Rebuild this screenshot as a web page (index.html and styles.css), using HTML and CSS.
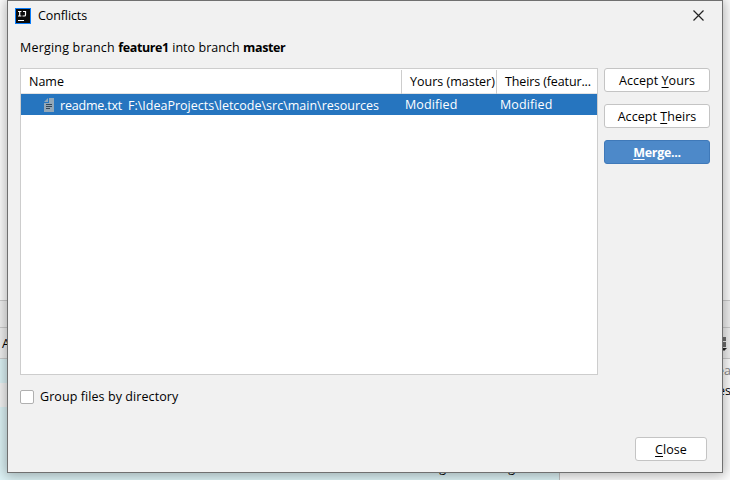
FILE: index.html
```html
<!DOCTYPE html>
<html lang="en">
<head>
<meta charset="utf-8">
<title>Conflicts</title>
<link rel="stylesheet" href="styles.css">
</head>
<body>
<div class="backdrop">
  <div class="editor"></div>
  <div class="tabs"></div>
  <div class="toolbar"><span>A</span>
    <svg width="8" height="16" viewBox="0 0 8 16"><path d="M0 1h5v4H0zM0 6h5v5H0z" fill="#6e6e6e"/><path d="M0 12h6L3 15z" fill="#222"/></svg>
  </div>
  <div class="panes">
    <div class="log"><div class="log-row"></div><div class="log-row plain"></div><div class="log-row rest"><span class="log-text">loading confirming</span></div></div>
    <div class="details"><div class="detail muted">ea</div><div class="detail">es</div></div>
  </div>
</div>
<div class="dialog">
  <div class="titlebar">
    <svg class="logo" width="16" height="16" viewBox="0 0 16 16"><rect width="16" height="16" fill="#087cfa"/><rect x="1" y="1" width="14" height="14" fill="#0a0a0a"/><path d="M3 3.5h3.4M4.7 3.5v4.5M3 8h3.4M8 3.5h2.5v3.5q0 1-1 1H7.5" fill="none" stroke="#fff" stroke-width="1.2"/><path d="M3 12h6v1H3z" fill="#fff"/></svg>
    <span class="title">Conflicts</span>
    <svg class="x" width="11" height="11" viewBox="0 0 11 11"><path d="M.5.5l10 10M10.5.5l-10 10" stroke="#222" stroke-width="1.2"/></svg>
  </div>
  <div class="message"><span class="lead">Merging branch </span><b>feature1</b><span class="into"> into branch </span><b>master</b></div>
  <div class="main">
    <div class="table">
      <div class="head"><div class="name"><span>Name</span></div><div class="yours"><span>Yours (master)</span></div><div class="theirs"><span>Theirs (featur...</span></div></div>
      <div class="row">
        <div class="file">
          <svg width="10" height="14" viewBox="0 0 10 14"><path d="M5 0h5v14H0V5h5z" fill="#93a7b7"/><path d="M4 0v4H0z" fill="#93a7b7"/><path d="M2 6.5h6M2 8.5h6M2 10.5h4" stroke="#344657"/></svg>
          <span class="fname">readme.txt</span><span class="path">F:\IdeaProjects\letcode\src\main\resources</span>
        </div>
        <div class="mod">Modified</div><div class="mod">Modified</div>
      </div>
    </div>
    <div class="actions">
      <button><span>Accept <u>Y</u>ours</span></button>
      <button><span>Accept <u>T</u>heirs</span></button>
      <button class="primary"><span><u>M</u>erge...</span></button>
    </div>
  </div>
  <label class="group"><i class="check"></i><span>Group files by directory</span></label>
  <div class="footer"><button class="close"><span><u>C</u>lose</span></button></div>
</div>
</body>
</html>
```
FILE: styles.css
```css
* { box-sizing: border-box; }
body { margin: 0; width: 730px; height: 480px; overflow: hidden; position: relative; font: 12.5px/18px "Open Sans", "Noto Sans", sans-serif; color: #000; background: #fff; }
svg { display: block; flex: none; }
.backdrop { display: flex; flex-direction: column; height: 480px; }
.editor { height: 300px; background: #fff; }
.tabs { height: 27px; background: #f2f2f2; border-top: 1px solid #cdcdcd; }
.toolbar { height: 32px; background: #f2f2f2; border: solid #cdcdcd; border-width: 1px 0; display: flex; justify-content: space-between; align-items: center; padding: 2px 1px 0 2px; }
.panes { display: flex; flex: 1; }
.log { width: 560px; border-right: 1px solid #c4c4c4; display: flex; flex-direction: column; }
.log-row { height: 24px; background: #def4f7; }
.log-row.plain { background: #f5f5f5; }
.log-row.rest { flex: 1; display: flex; justify-content: flex-end; align-items: flex-end; padding: 0 44px 3px 0; }
.log-text { white-space: nowrap; word-spacing: 3px; }
.details { flex: 1; display: flex; flex-direction: column; align-items: flex-end; padding: 3px 0; background: #fff; }
.detail { height: 20px; margin-right: -1px; }
.muted { color: #888; }
.dialog { position: absolute; left: 7px; top: 0; width: 716px; height: 473px; border: 1px solid #707070; background: #f1f1f1; box-shadow: 0 1px 12px 2px rgba(0,0,0,.3); display: flex; flex-direction: column; padding: 0 12px; }
.titlebar { display: flex; align-items: center; height: 28px; margin: 0 6px 0 -5px; padding-top: 1px; }
.title { margin-left: 7px; flex: 1; letter-spacing: -.1px; }
.x { margin-top: -1px; }
.message { margin-top: 10px; height: 29px; white-space: pre; }
.lead { letter-spacing: .2px; }
.message b { letter-spacing: -.38px; }
.into { letter-spacing: .05px; }
.main { display: flex; gap: 6px; height: 307px; }
.table { width: 578px; border: 1px solid #cdcdcd; background: #fff; }
.head { height: 25px; display: grid; grid-template-columns: 380px 95px 1fr; padding-bottom: 1px; border-bottom: 1px solid #e3e3e3; white-space: nowrap; line-height: 25px; }
.head > div { padding-left: 8px; }
.head .yours, .head .theirs { border-left: 1px solid #cdcdcd; margin-top: 1px; line-height: 23px; }
.theirs { letter-spacing: -.12px; }
.row { height: 21px; background: #2675bf; color: #fff; display: grid; grid-template-columns: 380px 95px 1fr; line-height: 21px; white-space: nowrap; }
.file { display: flex; align-items: center; padding-left: 23px; }
.fname { margin-left: 6px; width: 68px; letter-spacing: -.2px; }
.mod { padding-left: 4px; line-height: 22px; letter-spacing: .1px; }
.actions { display: flex; flex-direction: column; gap: 12px; }
button { width: 106px; height: 24px; padding: 2px 0 0; border: 1px solid #c4c4c4; border-radius: 3px; background: #fff; color: #000; font: inherit; line-height: 20px; letter-spacing: .05px; }
u { text-underline-offset: 2px; text-decoration-thickness: 1px; }
.primary { background: #4d89c9; border-color: #3f79b9; color: #fff; font-weight: 700; letter-spacing: -.3px; }
.group { display: flex; align-items: center; height: 18px; margin-top: 13px; letter-spacing: .08px; }
.check { width: 14px; height: 14px; border: 1px solid #b0b0b0; border-radius: 2px; background: #fff; margin-right: 6px; margin-top: -1px; }
.footer { display: flex; justify-content: flex-end; margin: 31px 3px 0 0; }
.close { width: 72px; }
```
